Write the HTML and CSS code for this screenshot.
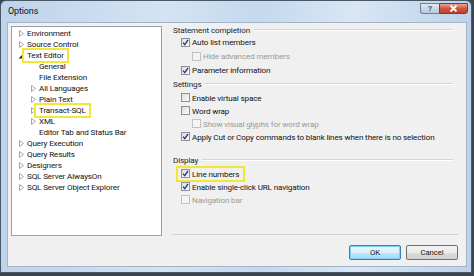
FILE: index.html
```html
<!DOCTYPE html>
<html>
<head>
<meta charset="utf-8">
<link rel="stylesheet" href="styles.css">
</head>
<body>
<div class="window">
  <div class="titlebar">
    <span class="title">Options</span>
    <div class="caption-btns">
      <span class="cbtn help">?</span>
      <span class="cbtn close"><svg width="9" height="7" viewBox="0 0 9 7"><path d="M1.5 0.5 L7.5 6.5 M7.5 0.5 L1.5 6.5" stroke="#fff" stroke-width="1.8"/></svg></span>
    </div>
  </div>
  <div class="client">
    <div class="main">
      <div class="tree">
        <div class="node l0"><span class="tw"><svg width="5" height="7" viewBox="0 0 5 7"><path d="M0.5 0.5 L4.5 3.5 L0.5 6.5 Z" fill="#fff" stroke="#a6a6a6"/></svg></span>Environment</div>
        <div class="node l0"><span class="tw"><svg width="5" height="7" viewBox="0 0 5 7"><path d="M0.5 0.5 L4.5 3.5 L0.5 6.5 Z" fill="#fff" stroke="#a6a6a6"/></svg></span>Source Control</div>
        <div class="node l0"><span class="tw"><svg width="6" height="6" viewBox="0 0 6 6"><path d="M5.5 0.5 L5.5 5.5 L0.5 5.5 Z" fill="#262626"/></svg></span><span class="hl">Text Editor</span></div>
        <div class="node l1"><span class="tw"></span>General</div>
        <div class="node l1"><span class="tw"></span>File Extension</div>
        <div class="node l1"><span class="tw"><svg width="5" height="7" viewBox="0 0 5 7"><path d="M0.5 0.5 L4.5 3.5 L0.5 6.5 Z" fill="#fff" stroke="#a6a6a6"/></svg></span>All Languages</div>
        <div class="node l1"><span class="tw"><svg width="5" height="7" viewBox="0 0 5 7"><path d="M0.5 0.5 L4.5 3.5 L0.5 6.5 Z" fill="#fff" stroke="#a6a6a6"/></svg></span>Plain Text</div>
        <div class="node l1"><span class="tw"><svg width="5" height="7" viewBox="0 0 5 7"><path d="M0.5 0.5 L4.5 3.5 L0.5 6.5 Z" fill="#fff" stroke="#a6a6a6"/></svg></span><span class="hl">Transact-SQL</span></div>
        <div class="node l1"><span class="tw"><svg width="5" height="7" viewBox="0 0 5 7"><path d="M0.5 0.5 L4.5 3.5 L0.5 6.5 Z" fill="#fff" stroke="#a6a6a6"/></svg></span>XML</div>
        <div class="node l1"><span class="tw"></span>Editor Tab and Status Bar</div>
        <div class="node l0"><span class="tw"><svg width="5" height="7" viewBox="0 0 5 7"><path d="M0.5 0.5 L4.5 3.5 L0.5 6.5 Z" fill="#fff" stroke="#a6a6a6"/></svg></span>Query Execution</div>
        <div class="node l0"><span class="tw"><svg width="5" height="7" viewBox="0 0 5 7"><path d="M0.5 0.5 L4.5 3.5 L0.5 6.5 Z" fill="#fff" stroke="#a6a6a6"/></svg></span>Query Results</div>
        <div class="node l0"><span class="tw"><svg width="5" height="7" viewBox="0 0 5 7"><path d="M0.5 0.5 L4.5 3.5 L0.5 6.5 Z" fill="#fff" stroke="#a6a6a6"/></svg></span>Designers</div>
        <div class="node l0"><span class="tw"><svg width="5" height="7" viewBox="0 0 5 7"><path d="M0.5 0.5 L4.5 3.5 L0.5 6.5 Z" fill="#fff" stroke="#a6a6a6"/></svg></span>SQL Server AlwaysOn</div>
        <div class="node l0"><span class="tw"><svg width="5" height="7" viewBox="0 0 5 7"><path d="M0.5 0.5 L4.5 3.5 L0.5 6.5 Z" fill="#fff" stroke="#a6a6a6"/></svg></span>SQL Server Object Explorer</div>
      </div>
      <div class="settings">
        <div class="group first"><span>Statement completion</span><i></i></div>
        <div class="opt r14"><span class="cb on"><svg width="7" height="7" viewBox="0 0 7 7"><path d="M1 3.6 L2.8 5.6 L6 1" fill="none" stroke="#2b3a8c" stroke-width="1.4"/></svg></span>Auto list members</div>
        <div class="opt r14 sub dis"><span class="cb"></span>Hide advanced members</div>
        <div class="opt r14"><span class="cb on"><svg width="7" height="7" viewBox="0 0 7 7"><path d="M1 3.6 L2.8 5.6 L6 1" fill="none" stroke="#2b3a8c" stroke-width="1.4"/></svg></span>Parameter information</div>
        <div class="group"><span>Settings</span><i></i></div>
        <div class="opt"><span class="cb"></span>Enable virtual space</div>
        <div class="opt"><span class="cb"></span>Word wrap</div>
        <div class="opt sub dis"><span class="cb"></span>Show visual glyphs for word wrap</div>
        <div class="opt"><span class="cb on"><svg width="7" height="7" viewBox="0 0 7 7"><path d="M1 3.6 L2.8 5.6 L6 1" fill="none" stroke="#2b3a8c" stroke-width="1.4"/></svg></span>Apply Cut or Copy commands to blank lines when there is no selection</div>
        <div class="group display"><span>Display</span><i></i></div>
        <div class="opt"><span class="hl2"><span class="cb on"><svg width="7" height="7" viewBox="0 0 7 7"><path d="M1 3.6 L2.8 5.6 L6 1" fill="none" stroke="#2b3a8c" stroke-width="1.4"/></svg></span>Line numbers</span></div>
        <div class="opt"><span class="cb on"><svg width="7" height="7" viewBox="0 0 7 7"><path d="M1 3.6 L2.8 5.6 L6 1" fill="none" stroke="#2b3a8c" stroke-width="1.4"/></svg></span>Enable single-click URL navigation</div>
        <div class="opt dis"><span class="cb"></span>Navigation bar</div>
      </div>
    </div>
    <div class="buttons">
      <span class="btn default">OK</span>
      <span class="btn">Cancel</span>
    </div>
  </div>
</div>
</body>
</html>
```

FILE: styles.css
```css
html, body {
  margin: 0;
  padding: 0;
}
body {
  width: 474px;
  height: 276px;
  background: #3b4552;
  font-family: Roboto, "Noto Sans", sans-serif;
  font-size: 8.1px;
  letter-spacing: -0.14px;
  color: #111;
  overflow: hidden;
}
.window {
  width: 470px;
  height: 271px;
  border: 1px solid #4a5866;
  border-radius: 6px 6px 0 0;
  background: linear-gradient(90deg, #bed4eb 0%, #d3e3f3 35%, #c4d9ee 55%, #d8e6f5 75%, #bcd2ea 100%);
  display: flex;
  flex-direction: column;
}
.titlebar {
  height: 21px;
  display: flex;
  align-items: flex-start;
  justify-content: space-between;
  padding: 0 3px 0 7px;
}
.title {
  font-size: 9px;
  line-height: 21px;
  color: #111;
}
.caption-btns {
  display: flex;
  margin-top: 2px;
}
.cbtn {
  height: 11px;
  display: flex;
  align-items: center;
  justify-content: center;
  border: 1px solid #6d7f94;
  box-sizing: border-box;
}
.help {
  width: 19px;
  border-right: none;
  border-radius: 0 0 0 3px;
  background: linear-gradient(#dfe8f2, #b8c9dc);
  font-size: 8px;
  color: #44546a;
  font-weight: bold;
}
.close {
  width: 29px;
  height: 11px;
  border-color: #7d3a32;
  border-radius: 0 0 3px 0;
  background: linear-gradient(#e9a495, #d2553f 50%, #c3402b);
}
.client {
  flex: 1;
  margin: 0 4px 5px 6px;
  background: #f0f0f0;
  border: 1px solid #a3b4c7;
  display: flex;
  flex-direction: column;
  padding: 3px 8px 0 3px;
}
.main {
  display: flex;
  height: 209px;
}
.tree {
  flex: none;
  width: 149px;
  height: 207px;
  background: #fff;
  border: 1px solid #9aa0a8;
  padding-top: 1px;
  box-sizing: content-box;
}
.node {
  height: 11px;
  line-height: 11px;
  display: flex;
  align-items: center;
  white-space: nowrap;
}
.l0 { padding-left: 3px; }
.l1 { padding-left: 15px; }
.tw {
  width: 12px;
  height: 11px;
  display: flex;
  align-items: center;
  justify-content: center;
  flex: none;
}
.hl {
  padding: 0 3px;
  margin: 0 -3px;
  box-shadow: 0 0 0 2px #f3e634;
  line-height: 11px;
}
.settings {
  flex: 1;
  min-width: 0;
  margin-left: 10px;
  border-bottom: 1px solid #d0d0d0;
  box-sizing: border-box;
  padding-right: 5px;
  display: flex;
  flex-direction: column;
  margin-top: -1px;
}
.group {
  height: 14px;
  display: flex;
  align-items: center;
  padding-left: 1px;
  color: #1e1e1e;
}
.group.first { height: 10px; }
.group.display { margin-top: 9px; height: 15px; }
.group i {
  flex: 1;
  height: 1px;
  background: #d5d5d5;
  margin-left: 4px;
  border-bottom: 1px solid #fff;
}
.opt {
  height: 13px;
  display: flex;
  align-items: center;
  padding-left: 9px;
  white-space: nowrap;
}
.opt.r14 { height: 14px; }
.opt.sub { padding-left: 20px; }
.opt.dis { color: #9a9a9a; }
.cb {
  width: 7px;
  height: 7px;
  border: 1px solid #8e8f8f;
  background: linear-gradient(135deg, #dcdcdc, #fdfdfd);
  margin-right: 2px;
  display: flex;
  align-items: center;
  justify-content: center;
  flex: none;
}
.opt.dis .cb {
  border-color: #c2c2c2;
  background: #f4f4f4;
}
.hl2 {
  display: flex;
  align-items: center;
  padding: 1px 4px 1px 3px;
  margin: -1px 0 -1px -3px;
  box-shadow: 0 0 0 2px #f3e634;
}
.buttons {
  display: flex;
  justify-content: flex-end;
  gap: 5px;
  margin-top: 10px;
}
.btn {
  width: 50px;
  height: 13px;
  border: 1px solid #707070;
  border-radius: 2px;
  background: linear-gradient(#f3f3f3, #ebebeb 50%, #dcdcdc 51%, #cfcfcf);
  display: flex;
  align-items: center;
  justify-content: center;
  font-size: 7.8px;
  color: #1a1a1a;
}
.btn.default {
  border-color: #3c7fb1;
  background: linear-gradient(#eaf6fd, #d9f0fc 50%, #bee6fd 51%, #a7d9f5);
  box-shadow: inset 0 0 0 1px #7fd0f5;
}
```
